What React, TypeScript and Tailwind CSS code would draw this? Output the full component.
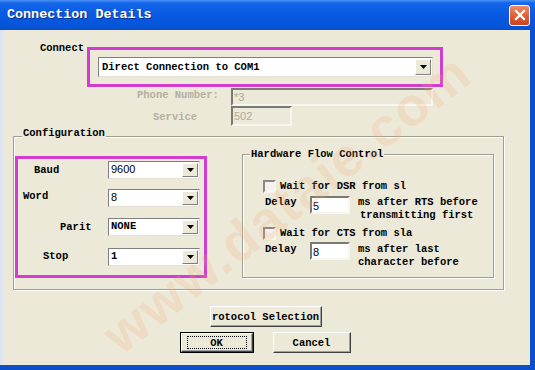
import React from 'react';

const mono = "font-['Liberation_Mono',monospace]";
const sans = "font-['Liberation_Sans',Arial,sans-serif]";

const Arrow = () => (
  <svg width="7" height="4" viewBox="0 0 7 4">
    <path d="M0 0h7L3.5 4z" fill="#000" />
  </svg>
);

const Combo = ({ value, className, textClass }: { value: string; className: string; textClass: string }) => (
  <div className={`flex bg-white border border-t-[#7f7f7f] border-l-[#7f7f7f] border-r-[#e4e1d4] border-b-[#e4e1d4] ${className}`}>
    <div className={`flex-1 pl-[2px] leading-[14px] text-black ${textClass}`}>{value}</div>
    <div className="m-[1px] flex w-[16px] items-center justify-center border border-t-white border-l-white border-r-[#7f7f7f] border-b-[#7f7f7f] bg-[#ece9d8]">
      <Arrow />
    </div>
  </div>
);

const Field = ({ value, className, disabled }: { value: string; className: string; disabled?: boolean }) => (
  <div
    className={`border-[2px] border-t-[#7a7a70] border-l-[#7a7a70] border-r-[#f7f6f0] border-b-[#f7f6f0] pl-[1px] text-[11px] font-normal leading-[14px] ${sans} ${
      disabled ? 'bg-[#ece9d8] text-[#aca899]' : 'bg-white text-black'
    } ${className}`}
  >
    {value}
  </div>
);

const Check = () => (
  <div className="h-[13px] w-[13px] shrink-0 border-[2px] border-t-[#8a8a80] border-l-[#8a8a80] border-r-[#f7f6f0] border-b-[#f7f6f0] bg-[#f3f2ec]" />
);

const Btn = ({ label, className, def }: { label: string; className: string; def?: boolean }) => (
  <div className={`${def ? 'border border-black' : ''} ${className}`}>
    <div className="flex h-full w-full items-center justify-center border border-t-white border-l-white border-r-[#404040] border-b-[#404040] bg-[#ece9d8] shadow-[inset_-1px_-1px_0_#a0a0a0]">
      <div className={`flex items-center justify-center ${def ? 'h-[13px] w-[60px] border border-dotted border-black' : ''}`}>
        <span className={`whitespace-nowrap text-[10.5px] font-bold leading-[12px] text-black ${mono}`}>{label}</span>
      </div>
    </div>
  </div>
);

export default function App() {
  return (
    <div className="relative flex h-[370px] w-[535px] flex-col overflow-hidden bg-[#0b4fca]">
      {/* title bar */}
      <div className="flex h-[30px] items-center justify-between bg-[linear-gradient(180deg,#4a90f5_0%,#1466ea_10%,#0a5be3_45%,#0556dc_80%,#0a4fcc_100%)] pl-[7px] pr-[5px]">
        <span className={`text-[13.4px] font-bold text-white [text-shadow:1px_1px_0_#0a2f8a] ${mono}`}>Connection Details</span>
        <div className="flex h-[21px] w-[21px] items-center justify-center rounded-[3px] border border-white bg-[linear-gradient(180deg,#f08a68_0%,#e0603a_50%,#c8431f_100%)]">
          <svg width="12" height="12" viewBox="0 0 12 12">
            <path d="M2 2l8 8M10 2l-8 8" stroke="#fff" strokeWidth="2.2" strokeLinecap="square" />
          </svg>
        </div>
      </div>

      {/* client */}
      <div className={`mr-[5px] mb-[5px] flex-1 border-l-[3px] border-l-[#dce5f2] bg-[#ece9d8] text-[10.5px] font-bold text-black ${mono}`}>
        {/* connect row */}
        <div className="flex items-start pt-[12px]">
          <div className="w-[81px] text-right leading-[12px]">Connect</div>
          <div className="mt-[5px] ml-[3px] h-[40px] w-[356px] border-[3px] border-[#d23cd0] pt-[7px] pl-[8px]">
            <Combo value="Direct Connection to COM1" className="h-[20px] w-[335px]" textClass="pt-[2px] pl-[3px]" />
          </div>
        </div>

        {/* phone / service */}
        <div className="mt-[1px] flex items-start">
          <div className="w-[228px] pt-[1px] pl-[134px] leading-[12px] text-[#b4b0a2]">Phone Number:</div>
          <Field value="*3" disabled className="h-[18px] w-[202px]" />
        </div>
        <div className="flex items-start">
          <div className="w-[228px] pt-[5px] pl-[150px] leading-[12px] text-[#b4b0a2]">Service</div>
          <Field value="502" disabled className="h-[20px] w-[61px] pt-[1px]" />
        </div>

        {/* configuration group */}
        <div className="relative mt-[10px] ml-[10px] flex h-[154px] w-[491px] items-start border border-[#a09f94] shadow-[1px_1px_0_#fff,inset_1px_1px_0_#fff]">
          <span className="absolute -top-[10px] left-[8px] bg-[#ece9d8] px-[1px] leading-[12px]">Configuration</span>

          <div className="mt-[19px] ml-[1px] h-[122px] w-[192px] border-[3px] border-[#d23cd0]">
            <div className="mt-[2px] flex items-start">
              <div className="w-[90px] pt-[3px] pl-[16px] leading-[12px]">Baud</div>
              <Combo value="9600" className="h-[18px] w-[92px]" textClass={`text-[11px] ${sans} font-normal`} />
            </div>
            <div className="mt-[10px] flex items-start">
              <div className="w-[90px] pt-[1px] pl-[5px] leading-[12px]">Word</div>
              <Combo value="8" className="h-[18px] w-[92px]" textClass={`text-[11px] ${sans} font-normal`} />
            </div>
            <div className="mt-[11px] flex items-start">
              <div className="w-[90px] pt-[3px] pl-[42px] leading-[12px]">Parit</div>
              <Combo value="NONE" className="h-[18px] w-[92px]" textClass="" />
            </div>
            <div className="mt-[12px] flex items-start">
              <div className="w-[90px] pt-[2px] pl-[25px] leading-[12px]">Stop</div>
              <Combo value="1" className="h-[18px] w-[92px]" textClass="" />
            </div>
          </div>

          <div className="relative mt-[17px] ml-[35px] h-[124px] w-[252px] border border-[#a09f94] pl-[20px] shadow-[1px_1px_0_#fff,inset_1px_1px_0_#fff]">
            <span className="absolute -top-[7px] left-[7px] bg-[#ece9d8] px-[1px] leading-[12px]">Hardware Flow Control</span>
            <div className="mt-[25px] flex items-center gap-[4px] leading-[13px]">
              <Check />
              <span>Wait for DSR from sl</span>
            </div>
            <div className="mt-[3px] ml-[2px] flex items-start">
              <div className="w-[45px] leading-[12px]">Delay</div>
              <Field value="5" className="h-[18px] w-[40px] pt-[1px]" />
              <div className="ml-[8px] leading-[13px]">
                ms after RTS before
                <br />
                <span className="pl-[2px]">transmitting first</span>
              </div>
            </div>
            <div className="mt-[5px] flex items-center gap-[4px] leading-[13px]">
              <Check />
              <span>Wait for CTS from sla</span>
            </div>
            <div className="mt-[2px] ml-[2px] flex items-start">
              <div className="w-[45px] pt-[1px] leading-[12px]">Delay</div>
              <Field value="8" className="h-[18px] w-[40px] pt-[1px]" />
              <div className="ml-[8px] pt-[1px] leading-[13px]">
                ms after last
                <br />
                character before
              </div>
            </div>
          </div>
        </div>

        {/* buttons */}
        <div className="mt-[16px] flex justify-center pr-[2px]">
          <Btn label="rotocol Selection" className="h-[21px] w-[112px]" />
        </div>
        <div className="mt-[5px] flex justify-center gap-[19px] pr-[3px]">
          <Btn label="OK" def className="h-[21px] w-[74px]" />
          <Btn label="Cancel" className="h-[21px] w-[78px]" />
        </div>
      </div>

      {/* watermark */}
      <div className="pointer-events-none absolute left-[62px] top-[176px] origin-center -rotate-[38deg] select-none text-[54px] font-bold leading-none tracking-[2px] text-[#f6a878] opacity-20 font-['Liberation_Sans',Arial,sans-serif]">
        www.dataie.com
      </div>
    </div>
  );
}
